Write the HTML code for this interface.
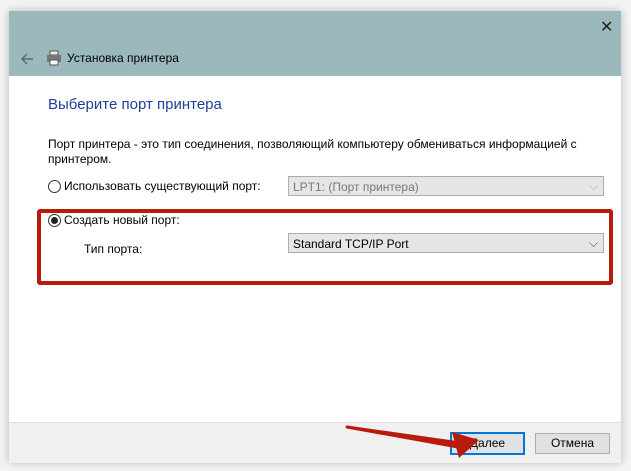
<!DOCTYPE html><html><head><style>
body{margin:0;width:631px;height:471px;background:#f3f3f3;position:relative;overflow:hidden;font-family:"Liberation Sans","Noto Sans CJK SC",sans-serif;font-size:12px;color:#000}
.win{position:absolute;left:9px;top:11px;width:612px;height:451px;background:#fff;box-shadow:0 0 8px rgba(0,0,0,.25)}
.tb{position:absolute;left:0;top:0;width:612px;height:65px;background:#9bb9bd}
.a{position:absolute;white-space:nowrap}
.radio{position:absolute;width:11px;height:11px;border:1px solid #333;border-radius:50%;background:#fff}
.sel{position:absolute;height:20px;border:1px solid #adadad;background:#e6e6e6;box-sizing:border-box;padding:3px 4px}
.foot{position:absolute;left:0;top:411px;width:612px;height:40px;background:#f0f0f0;border-top:1px solid #dfdfdf}
.btn{position:absolute;top:422px;height:19px;width:73px;border:1px solid #adadad;background:#e1e1e1;text-align:center;line-height:19px;box-sizing:content-box}
</style></head><body>
<div class="win">
<div class="tb"></div>
<div class="a" style="left:591px;top:6px;font-size:16px;color:#222">✕</div>
<svg class="a" style="left:10px;top:41px" width="16" height="14"><path d="M14 7H3M8 2L3 7l5 5" stroke="#666" stroke-width="1.5" fill="none"/></svg>
<svg class="a" style="left:37px;top:39px" width="16" height="16"><rect x="4" y="1" width="8" height="4" fill="#eee" stroke="#555"/><rect x="1" y="5" width="14" height="7" fill="#777"/><rect x="4" y="10" width="8" height="5" fill="#fff" stroke="#555"/></svg>
<div class="a" style="left:58px;top:40px;font-size:12px">Установка принтера</div>
<div class="a" style="left:39px;top:85px;font-size:15px;color:#1e3d9c">Выберите порт принтера</div>
<div class="a" style="left:39px;top:126px">Порт принтера - это тип соединения, позволяющий компьютеру обмениваться информацией с</div>
<div class="a" style="left:39px;top:141px">принтером.</div>
<div class="radio" style="left:39px;top:169px"></div>
<div class="a" style="left:55px;top:168px">Использовать существующий порт:</div>
<div class="sel" style="left:279px;top:165px;width:316px;color:#777">LPT1: (Порт принтера)</div>
<div class="radio" style="left:39px;top:203px"></div><div class="a" style="left:42px;top:206px;width:7px;height:7px;border-radius:50%;background:#222"></div>
<div class="a" style="left:55px;top:202px">Создать новый порт:</div>
<div class="a" style="left:75px;top:231px">Тип порта:</div>
<div class="sel" style="left:279px;top:222px;width:316px">Standard TCP/IP Port</div>
<div class="a" style="left:580px;top:225px;color:#555">⌵</div>
<div class="a" style="left:580px;top:168px;color:#aaa">⌵</div>
<div class="a" style="left:28px;top:198px;width:568px;height:68px;border:4px solid #b81a0c;border-radius:3px"></div>
<div class="foot"></div>
<div class="btn" style="left:441px;border:2px solid #0078d7;top:421px;width:71px">Далее</div>
<div class="btn" style="left:526px">Отмена</div>
</div>
<svg class="a" style="left:0;top:0" width="631" height="471"><path d="M347 427L460 443L458 447Z" fill="#b81a0c" stroke="#b81a0c" stroke-width="3" stroke-linejoin="round"/><path d="M479 440L452 432L459 458Z" fill="#b81a0c"/></svg>
</body></html>
